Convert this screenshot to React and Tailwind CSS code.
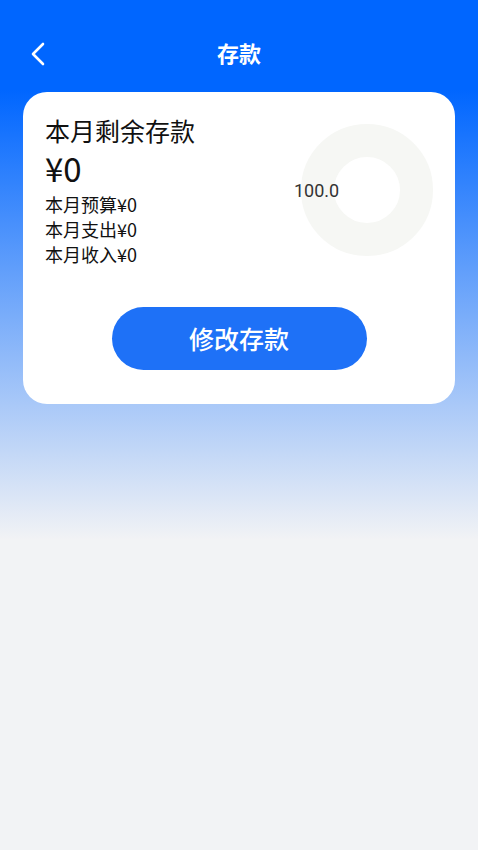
import React from 'react';

const font = { fontFamily: '"Noto Sans CJK SC", "Noto Sans", sans-serif' };

const Donut = () => (
  <div className="relative w-[132px] h-[132px] mt-[10px]">
    <svg width="132" height="132" viewBox="0 0 132 132">
      <circle cx="66" cy="66" r="49.5" fill="none" stroke="#f6f7f4" strokeWidth="33" />
    </svg>
    <span className="absolute left-[-7px] top-[55px] text-[18px] leading-[24px] text-[#333] font-['Roboto',sans-serif]">
      100.0
    </span>
  </div>
);

const App = () => {
  const stats = [
    { label: '本月预算', value: '¥0' },
    { label: '本月支出', value: '¥0' },
    { label: '本月收入', value: '¥0' },
  ];

  return (
    <div
      className="min-h-[850px] w-full pt-[30px] bg-[#f2f3f5] bg-[linear-gradient(180deg,#0066ff_0px,#0066ff_90px,#f2f3f5_540px)] bg-no-repeat"
      style={font}
    >
      <div className="relative h-[44px] flex items-center justify-center">
        <button className="absolute left-[26px] top-[9px] w-[24px] h-[30px] flex items-center justify-center">
          <svg width="16" height="24" viewBox="0 0 16 24" fill="none">
            <path d="M13 2 L3 12 L13 22" stroke="#fff" strokeWidth="2.6" strokeLinecap="round" strokeLinejoin="round" />
          </svg>
        </button>
        <h1 className="text-[22px] font-bold text-white leading-[30px]">存款</h1>
      </div>

      <div className="mx-[23px] mt-[18px] bg-white rounded-[24px] pt-[22px] px-[22px] pb-[34px]">
        <div className="flex justify-between items-start">
          <div className="text-[#111]">
            <p className="text-[25px] leading-[32px]">本月剩余存款</p>
            <p className="text-[33px] leading-[42px] mt-[1px] mb-[3px]">¥0</p>
            {stats.map((s) => (
              <p key={s.label} className="text-[18px] leading-[25px]">
                {s.label}
                {s.value}
              </p>
            ))}
          </div>
          <Donut />
        </div>

        <div className="flex justify-center mt-[40px]">
          <button className="w-[255px] h-[63px] rounded-full bg-[#1e71f7] text-white text-[25px] font-medium">
            修改存款
          </button>
        </div>
      </div>
    </div>
  );
};

export default App;
